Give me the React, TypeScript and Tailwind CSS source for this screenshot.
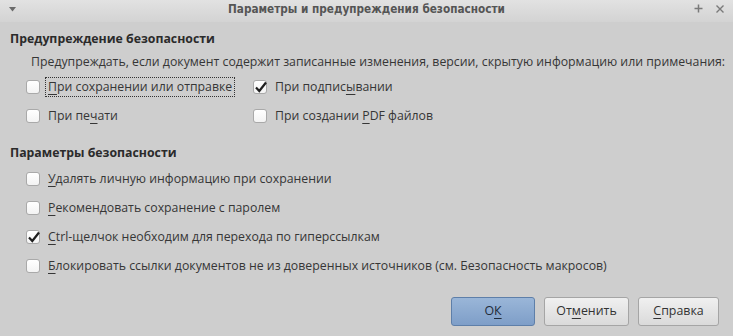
import React from "react";

const font = { fontFamily: '"Open Sans", "Noto Sans", sans-serif' };

function Box({ checked }: { checked?: boolean }) {
  return (
    <span className="relative inline-block w-[14px] h-[14px] shrink-0 rounded-[3px] border border-[#a9a9a9] bg-gradient-to-b from-white to-[#f3f3f3]">
      {checked && (
        <svg className="absolute -left-[1px] -top-[2px]" width="16" height="16" viewBox="0 0 16 16">
          <path d="M3 8.5 L6.3 12 L13 3.5" fill="none" stroke="#1e1e1e" strokeWidth="2.2" />
        </svg>
      )}
    </span>
  );
}

function U({ children }: { children: React.ReactNode }) {
  return <span className="underline underline-offset-[3px] decoration-1">{children}</span>;
}

function Check({
  checked,
  focused,
  children,
}: {
  checked?: boolean;
  focused?: boolean;
  children: React.ReactNode;
}) {
  return (
    <div className="flex items-center h-[29px]">
      <Box checked={checked} />
      <span
        className={
          "ml-[6px] px-[2px] leading-[18px] " +
          (focused ? "outline outline-1 outline-dotted outline-[#333]" : "")
        }
      >
        {children}
      </span>
    </div>
  );
}

function Btn({ children, primary, w }: { children: React.ReactNode; primary?: boolean; w: string }) {
  return (
    <button
      className={
        "h-[29px] rounded-[3px] border text-[12.4px] " +
        w +
        " " +
        (primary
          ? "border-[#5e7fa9] bg-gradient-to-b from-[#9ab6d8] to-[#7e9ec8] text-[#1f2b3a]"
          : "border-[#a5a5a5] bg-gradient-to-b from-[#f0f0f0] to-[#dadada] text-[#333]")
      }
    >
      {children}
    </button>
  );
}

export default function App() {
  return (
    <div className="w-[733px] h-[336px] bg-[#cecece] text-[12.3px] text-[#363636] flex flex-col" style={font}>
      <div className="h-[22px] relative flex justify-center pt-[1px] bg-gradient-to-b from-[#e2e2e2] to-[#d3d3d3]">
        <svg className="absolute left-[8px] top-[5px]" width="9" height="8" viewBox="0 0 9 8">
          <path d="M1 2 L8 2 L4.5 6.5 Z" fill="#6a6a6a" />
        </svg>
        <span
          className="font-bold text-[11.7px] leading-[16px] text-[#555]"
          style={{ fontFamily: '"Liberation Sans Narrow", "DejaVu Sans Condensed", sans-serif' }}
        >
          Параметры и предупреждения безопасности
        </span>
        <svg className="absolute right-[30px] top-[4px]" width="9" height="9" viewBox="0 0 9 9">
          <path d="M4.5 0.5 V8.5 M0.5 4.5 H8.5" stroke="#7a7a7a" strokeWidth="1.5" />
        </svg>
        <svg className="absolute right-[8px] top-[4px]" width="10" height="10" viewBox="0 0 10 10">
          <path d="M1.5 1.5 L8.5 8.5 M8.5 1.5 L1.5 8.5" stroke="#7a7a7a" strokeWidth="1.4" />
        </svg>
      </div>

      <div className="pl-[10px] pt-[8px]">
        <div className="font-bold leading-[18px] text-[#2b2b2b]">Предупреждение безопасности</div>
        <div className="pl-[21px] mt-[5px] leading-[18px] whitespace-nowrap">
          Предупреждать, если документ содержит записанные изменения, версии, скрытую информацию или примечания:
        </div>
        <div className="pl-[16px] mt-[1px] grid grid-cols-[227px_1fr]">
          <Check focused>
            <U>П</U>ри сохранении или отправке
          </Check>
          <Check checked>
            При подпис<U>ы</U>вании
          </Check>
          <Check>
            При пе<U>ч</U>ати
          </Check>
          <Check>
            При создании <U>P</U>DF файлов
          </Check>
        </div>

        <div className="font-bold leading-[18px] mt-[14px] text-[#2b2b2b]">Параметры безопасности</div>
        <div className="pl-[16px] mt-[2px] flex flex-col">
          <Check>
            <U>У</U>далять личную информацию при сохранении
          </Check>
          <Check>
            <U>Р</U>екомендовать сохранение с паролем
          </Check>
          <Check checked>
            <U>C</U>trl-щелчок необходим для перехода по гиперссылкам
          </Check>
          <Check>
            <U>Б</U>локировать ссылки документов не из доверенных источников (см. Безопасность макросов)
          </Check>
        </div>
      </div>

      <div className="mt-auto mb-[10px] pr-[14px] flex justify-end gap-[9px]">
        <Btn primary w="w-[84px]">
          О<U>К</U>
        </Btn>
        <Btn w="w-[85px]">
          От<U>м</U>енить
        </Btn>
        <Btn w="w-[81px]">
          <U>С</U>правка
        </Btn>
      </div>
    </div>
  );
}
